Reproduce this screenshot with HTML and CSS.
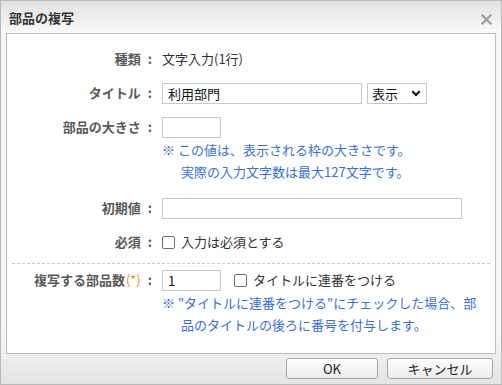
FILE: index.html
```html
<!DOCTYPE html>
<html>
    <head>
        <title>部品の複写</title>
        <meta charset="utf-8">
        <link rel="stylesheet" href="styles.css">
    </head>
    <body>
        <div class="dlg">
            <div class="dlg__titlebar">
                <span class="dlg__title">部品の複写</span>
                <svg class="dlg__close" width="11" height="11" viewBox="0 0 11 11">
                    <path d="M1.5 1.5 L9.5 9.5 M9.5 1.5 L1.5 9.5" stroke="#a3a3a3" stroke-width="2.4" stroke-linecap="square"/>
                </svg>
            </div>

            <div class="dlg__panel">
                <div class="form">
                    <div class="form__label">種類<span class="form__colon">:</span></div>
                    <div class="form__value">文字入力(1行)</div>

                    <div class="form__label">タイトル<span class="form__colon">:</span></div>
                    <div class="form__value">
                        <input type="text" class="inp inp--title" value="利用部門">
                        <span class="sel">
                            <select class="sel__box">
                                <option>表示</option>
                                <option>非表示</option>
                            </select>
                            <svg class="sel__arrow" width="10" height="7" viewBox="0 0 10 7">
                                <path d="M1.3 1.3 L5 5 L8.7 1.3" stroke="#111" stroke-width="2.2" fill="none"/>
                            </svg>
                        </span>
                    </div>

                    <div class="form__label">部品の大きさ<span class="form__colon">:</span></div>
                    <div class="form__value">
                        <input type="text" class="inp inp--small">
                    </div>
                    <div></div>
                    <div class="form__note">※ この値は、表示される枠の大きさです。<br>実際の入力文字数は最大127文字です。</div>

                    <div class="form__label">初期値<span class="form__colon">:</span></div>
                    <div class="form__value">
                        <input type="text" class="inp inp--wide">
                    </div>

                    <div class="form__label">必須<span class="form__colon">:</span></div>
                    <div class="form__value">
                        <label class="chk"><input type="checkbox" class="chk__box">入力は必須とする</label>
                    </div>
                </div>

                <div class="dlg__sep"></div>

                <div class="form form--copy">
                    <div class="form__label">複写する部品数<span class="form__req">(*)</span><span class="form__colon">:</span></div>
                    <div class="form__value">
                        <input type="text" class="inp inp--small" value="1">
                        <label class="chk chk--serial"><input type="checkbox" class="chk__box">タイトルに連番をつける</label>
                    </div>
                    <div></div>
                    <div class="form__note">※ "タイトルに連番をつける"にチェックした場合、部<br>品のタイトルの後ろに番号を付与します。</div>
                </div>
            </div>

            <div class="dlg__footer">
                <button class="btn btn--ok">OK</button>
                <button class="btn btn--cancel">キャンセル</button>
            </div>
        </div>
    </body>
</html>
```

FILE: styles.css
```css
* {
    box-sizing: border-box;
}

html, body {
    margin: 0;
    padding: 0;
}

body {
    font-family: "Noto Sans CJK JP", "Noto Sans", sans-serif;
    font-size: 13px;
    color: #333;
}

.dlg {
    width: 502px;
    height: 385px;
    border: 1px solid #b9b9b9;
    background: linear-gradient(to bottom, #e2e2e2 0px, #f7f7f7 30px, #f7f7f7 330px, #e3e3e3 384px);
    display: flex;
    flex-direction: column;
}

.dlg__titlebar {
    height: 32px;
    display: flex;
    align-items: center;
    justify-content: space-between;
    padding: 0 9px 0 8px;
}

.dlg__title {
    font-weight: bold;
    font-size: 13px;
    color: #333;
    line-height: 1;
    margin-top: 1px;
}

.dlg__close {
    display: block;
    margin-top: 4px;
}

.dlg__panel {
    margin: 0 5px;
    height: 321px;
    background: #fff;
    border: 1px solid #bcbcbc;
    padding-top: 14px;
}

.form {
    display: grid;
    grid-template-columns: 148px 1fr;
    column-gap: 7px;
    row-gap: 12px;
    align-items: center;
}

.form__label {
    text-align: right;
    font-weight: bold;
    color: #595959;
    line-height: 22px;
    white-space: nowrap;
    padding-right: 3px;
}

.form__colon {
    margin-left: 7px;
}

.form__req {
    color: #f08a24;
    font-weight: normal;
    margin-left: 1px;
}

.form__value {
    display: flex;
    align-items: center;
    min-height: 22px;
    line-height: 22px;
}

.form__note {
    color: #3b6fd6;
    line-height: 22px;
    padding-left: 19px;
    text-indent: -19px;
    margin-top: -11px;
    margin-bottom: 2px;
}

.inp {
    height: 21px;
    border: 1px solid #c8c8c8;
    padding: 0 5px;
    font-family: inherit;
    font-size: 13px;
    color: #111;
    outline: none;
}

.inp--title {
    width: 200px;
}

.inp--small {
    width: 59px;
}

.inp--wide {
    width: 300px;
}

.sel {
    position: relative;
    margin-left: 5px;
    display: inline-block;
    height: 21px;
}

.sel__box {
    -webkit-appearance: none;
    appearance: none;
    width: 60px;
    height: 21px;
    border: 1px solid #c8c8c8;
    background: #fff;
    padding: 0 4px;
    font-family: inherit;
    font-size: 13px;
    color: #111;
    outline: none;
}

.sel__arrow {
    position: absolute;
    right: 6px;
    top: 7px;
    pointer-events: none;
}

.chk {
    display: flex;
    align-items: center;
    color: #333;
}

.chk__box {
    -webkit-appearance: none;
    appearance: none;
    width: 13px;
    height: 13px;
    margin: 0 6px 0 0;
    border: 1px solid #6f6f6f;
    border-radius: 2px;
    background: #fff;
}

.chk--serial {
    margin-left: 13px;
}

.dlg__sep {
    margin: 10px 5px 5px 5px;
    border-top: 1px dashed #c9c9c9;
}

.dlg__footer {
    flex: 1;
    display: flex;
    justify-content: flex-end;
    align-items: flex-start;
    gap: 9px;
    padding: 4px 8px 0 0;
}

.btn {
    height: 21px;
    border: 1px solid #a9a9a9;
    border-radius: 3px;
    background: linear-gradient(to bottom, #fdfdfd, #ececec);
    font-family: inherit;
    font-size: 13px;
    color: #222;
    padding: 0;
    line-height: 19px;
}

.btn--ok {
    width: 92px;
}

.btn--cancel {
    width: 106px;
}
```
